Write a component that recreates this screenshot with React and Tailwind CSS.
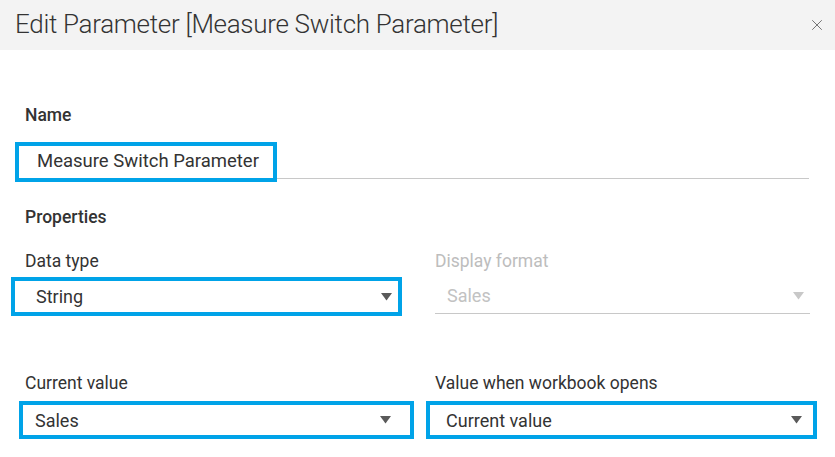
import { X } from "lucide-react";

const Caret = ({ light }) => (
  <svg width="11" height="8" viewBox="0 0 11 8" className="shrink-0">
    <path d="M0 0 L11 0 L5.5 7.5 Z" fill={light ? "#c8c8c8" : "#5a5a5a"} />
  </svg>
);

const Select = ({ value, pad, className = "" }) => (
  <div
    className={`flex items-center justify-between border-4 border-[#00a3e8] bg-white text-[18px] text-[#333] ${pad} ${className}`}
  >
    <span>{value}</span>
    <Caret />
  </div>
);

export default function App() {
  return (
    <div className="w-[835px] h-[457px] bg-white font-['Roboto',sans-serif] text-[#333] overflow-hidden">
      <div className="h-[50px] bg-[#f3f3f3] flex items-center justify-between pl-[15px] pr-[9px]">
        <h1 className="text-[26px] font-light tracking-[-0.3px] text-[#333] leading-none pb-[2px]">
          Edit Parameter [Measure Switch Parameter]
        </h1>
        <X className="w-[18px] h-[18px] text-[#666]" strokeWidth={1.2} />
      </div>

      <div className="px-[25px]">
        <div className="pt-[55px] text-[17.5px] font-medium leading-[20px]">Name</div>
        <div className="mt-[17px] flex items-end -ml-[10px] mr-[1px]">
          <div className="h-[40px] border-4 border-[#00a3e8] flex items-center pl-[18px] pr-[14px] text-[18.5px] whitespace-nowrap">
            Measure Switch Parameter
          </div>
          <div className="flex-1 border-b border-[#c8c8c8] mb-[3px]" />
        </div>

        <div className="mt-[25px] text-[17.5px] font-medium leading-[20px]">Properties</div>

        <div className="mt-[24px] grid grid-cols-[376px_375px] gap-x-[34px]">
          <div>
            <div className="text-[17.5px] leading-[20px]">Data type</div>
            <Select
              value="String"
              pad="pl-[21px] pr-[6px]"
              className="mt-[6px] h-[39px] -ml-[14px] -mr-[1px]"
            />
          </div>
          <div>
            <div className="text-[17.5px] leading-[20px] text-[#bdbdbd]">Display format</div>
            <div className="mt-[7px] h-[36px] flex items-center justify-between border-b border-[#c8c8c8] pl-[12px] pr-[6px] text-[18px] text-[#c2c2c2]">
              <span>Sales</span>
              <Caret light />
            </div>
          </div>
        </div>

        <div className="mt-[57px] grid grid-cols-[376px_375px] gap-x-[34px]">
          <div>
            <div className="text-[17.5px] leading-[20px]">Current value</div>
            <Select
              value="Sales"
              pad="pl-[12px] pr-[19px]"
              className="mt-[8px] h-[38px] -ml-[6px] -mr-[13px]"
            />
          </div>
          <div>
            <div className="text-[17.5px] leading-[20px]">Value when workbook opens</div>
            <Select
              value="Current value"
              pad="pl-[16px] pr-[11px]"
              className="mt-[8px] h-[38px] -ml-[9px] -mr-[7px]"
            />
          </div>
        </div>
      </div>
    </div>
  );
}
